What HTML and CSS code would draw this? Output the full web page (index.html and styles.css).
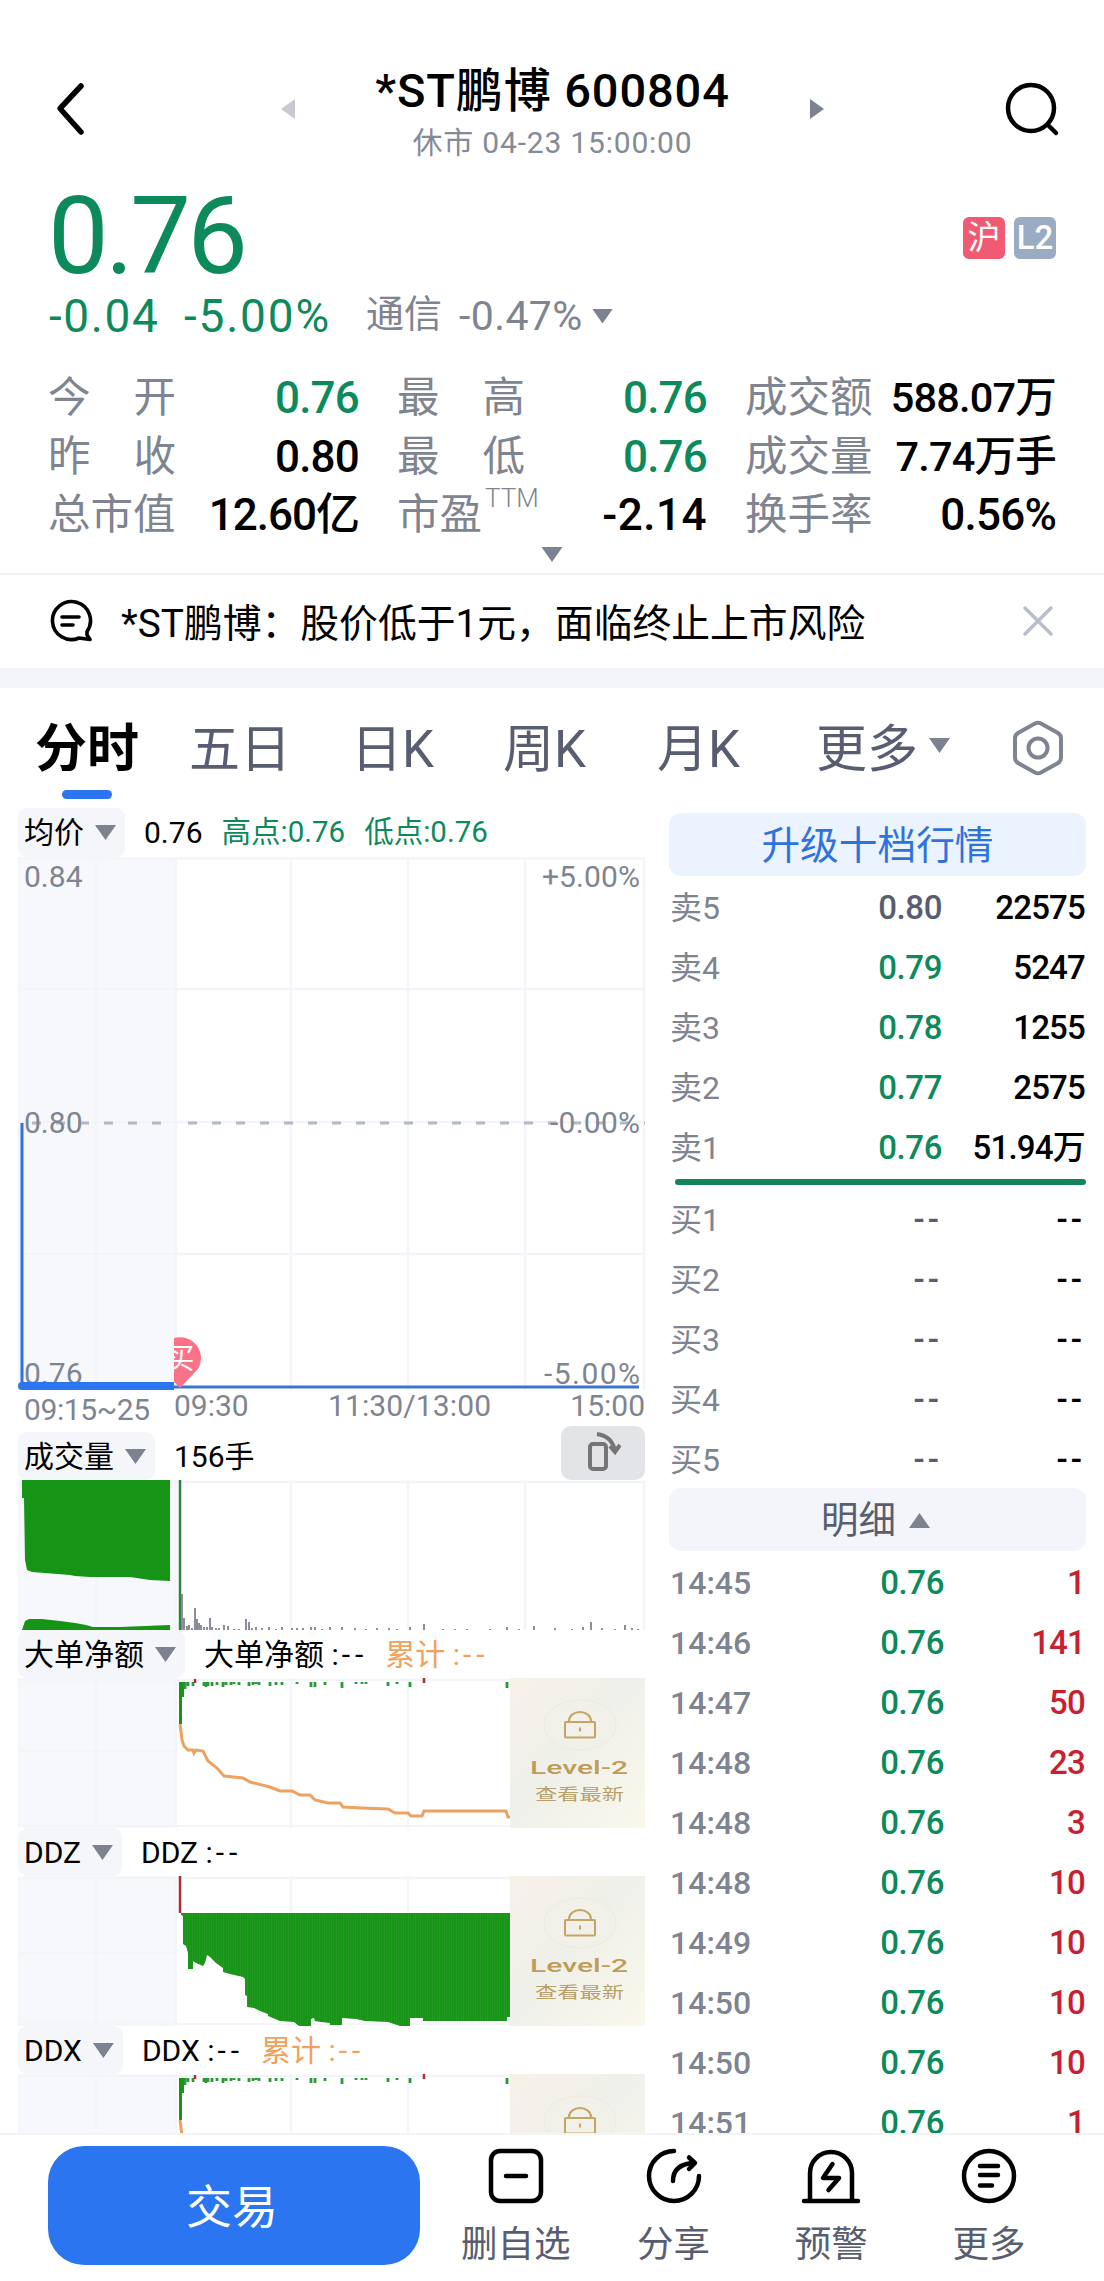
FILE: index.html
```
<!DOCTYPE html>
<html lang="zh-CN">
<head>
    <meta charset="UTF-8">
    <meta name="viewport" content="width=device-width, initial-scale=1.0">
    <title>*ST鹏博 600804</title>
    <link rel="stylesheet" href="styles.css">
</head>
<body>

<!-- shared shapes -->
<svg class="defs" width="0" height="0">
    <defs>
        <linearGradient id="gold" x1="0" y1="0" x2="1" y2="1">
            <stop offset="0" stop-color="#f7f1e9"/>
            <stop offset="0.45" stop-color="#eff0ea"/>
            <stop offset="1" stop-color="#faf8ec"/>
        </linearGradient>
        <pattern id="stripes" width="2.400" height="10" patternUnits="userSpaceOnUse">
            <rect width="2.400" height="10" fill="#169416"/>
            <rect width="0.500" height="10" fill="#2da02d"/>
        </pattern>
        <g id="lock">
            <rect x="510" y="0" width="135" height="150" fill="url(#gold)"/>
            <ellipse cx="580" cy="47" rx="36" ry="25" fill="#f1f1ea" stroke="#ebebe3"/>
            <g fill="none" stroke="#c5a566" stroke-width="2">
                <rect x="565" y="44" width="30" height="15.500" rx="1"/>
                <path d="M569 44v-1a11 9 0 0 1 22 0v1M580 49.500v4"/>
            </g>
            <text class="lock-title" x="530" y="96" textLength="98" lengthAdjust="spacingAndGlyphs">Level-2</text>
            <text class="lock-text" x="535" y="122" textLength="89" lengthAdjust="spacingAndGlyphs">查看最新</text>
        </g>
        <g id="grid">
            <rect x="18" y="0" width="157" height="150" fill="#f6f8fc"/>
            <path d="M18 2H645M19 0V150M96 0V150M176 0V150M291 0V150M408 0V150M525 0V150M644 0V150" fill="none" stroke="#f4f5f9" stroke-width="2.500"/>
        </g>
        <g id="netflow">
            <rect x="179" y="4" width="3" height="42" fill="#169416"/>
            <rect x="181" y="4" width="3" height="15" fill="#169416"/>
            <path d="M185 4v7M188 4v4M193 4v4M204 4v4M206 4v5M208 4v4M212 4v4M217 4v3M223 4v5M226 4v3M231 4v3M234 4v2M239 4v3M249 4v4M253 4v3M256 4v2M259 4v3M270 4v4M276 4v3M282 4v3M297 4v2M311 4v5M315 4v5M325 4v3M342 4v6M356 4v2M362 4v2M366 4v2M388 4v4M397 4v2M410 4v5M507 4v6" fill="none" stroke="#2a9a35" stroke-width="2.800"/>
            <path d="M195 1v4M424 0v5" fill="none" stroke="#b02a37" stroke-width="2.500"/>
            <path d="M180 46L182 62L184 68L188 72H193L194 75L196 72L203 73L208 83L217 90L224 98L243 100L250 104L270 109L280 113H292L300 117H310L315 122L328 125H340L343 129L362 130L388 131L395 135H408L411 138H422L424 133H506L508 139H510" fill="none" stroke="#eca360" stroke-width="3"/>
        </g>
    </defs>
</svg>

<header class="topbar">
    <svg class="back" viewBox="0 0 40 60"><path d="M31 8L10 30.500L31 54"/></svg>
    <svg class="prev" viewBox="0 0 14 20"><path d="M14 0V20L0 10Z"/></svg>
    <div class="title">
        <h1>*ST鹏博 600804</h1>
        <p>休市 04-23 15:00:00</p>
    </div>
    <svg class="next" viewBox="0 0 14 20"><path d="M0 0V20L14 10Z"/></svg>
    <svg class="search" viewBox="0 0 60 60"><circle cx="29" cy="29" r="23"/><path d="M46 46L54 54"/></svg>
</header>

<section class="quote">
    <div class="price-row">
        <span class="price">0.76</span>
        <span class="badges"><i class="badge red">沪</i><i class="badge blue">L2</i></span>
    </div>
    <div class="change-row">
        <span class="chg">-0.04</span>
        <span class="pct">-5.00%</span>
        <span class="sector">通信</span>
        <span class="sector-pct">-0.47%</span>
        <i class="tri"></i>
    </div>
    <div class="stats">
        <div><span class="spread"><b>今</b><b>开</b></span><em class="green">0.76</em></div>
        <div><span class="spread"><b>最</b><b>高</b></span><em class="green">0.76</em></div>
        <div><span>成交额</span><em class="small">588.07万</em></div>
        <div><span class="spread"><b>昨</b><b>收</b></span><em>0.80</em></div>
        <div><span class="spread"><b>最</b><b>低</b></span><em class="green">0.76</em></div>
        <div><span>成交量</span><em class="small">7.74万手</em></div>
        <div><span>总市值</span><em class="cap">12.60亿</em></div>
        <div><span>市盈<sup>TTM</sup></span><em class="pe">-2.14</em></div>
        <div><span>换手率</span><em>0.56%</em></div>
    </div>
    <div class="expand"><i class="tri"></i></div>
</section>

<section class="notice">
    <svg class="bubble" viewBox="0 0 46 46"><path d="M39 33.500A19 19 0 1 0 31 40L42 41.500L39 37Z"/><path d="M14 19H31M14 27H25"/></svg>
    <p>*ST鹏博：股价低于1元，面临终止上市风险</p>
    <svg class="close" viewBox="0 0 30 30"><path d="M2 2L28 28M28 2L2 28"/></svg>
</section>

<nav class="tabs">
    <a class="active">分时</a>
    <a>五日</a>
    <a>日K</a>
    <a>周K</a>
    <a>月K</a>
    <a class="more">更多<i class="tri"></i></a>
    <svg class="setting" viewBox="0 0 52 56"><path d="M23 3.500Q26 2 29 3.500L46 13Q49 15 49 18V38Q49 41 46 43L29 52.500Q26 54 23 52.500L6 43Q3 41 3 38V18Q3 15 6 13Z"/><circle cx="26" cy="28" r="9.500"/></svg>
</nav>

<main class="board">
    <section class="charts">
        <div class="bar first">
            <span class="pill">均价<i class="tri"></i></span>
            <span class="v1">0.76</span>
            <span class="v2">高点:0.76</span>
            <span class="v2">低点:0.76</span>
        </div>
        <svg class="price-chart" viewBox="18 857 627 575">
            <rect x="18" y="857" width="157" height="533" fill="#f6f8fc"/>
            <path d="M18 858.500H645M18 989H645M18 1122H645M18 1254H645M19 857V1390M96 857V1390M176 857V1390M291 857V1390M408 857V1390M525 857V1390M644 857V1390" fill="none" stroke="#f4f5f9" stroke-width="2.500"/>
            <path d="M32 1123H174" stroke="#b4b8c5" stroke-width="3" stroke-dasharray="9 15"/>
            <path d="M188 1123H645" stroke="#b4b8c5" stroke-width="3" stroke-dasharray="9 15"/>
            <g class="axis">
                <text x="24" y="887">0.84</text>
                <text x="24" y="1133">0.80</text>
                <text x="24" y="1384">0.76</text>
                <text x="640" y="887" text-anchor="end" textLength="98">+5.00%</text>
                <text x="640" y="1133" text-anchor="end" textLength="90">-0.00%</text>
                <text x="640" y="1384" text-anchor="end" textLength="96">-5.00%</text>
                <text x="24" y="1420" textLength="126">09:15~25</text>
                <text x="174" y="1416">09:30</text>
                <text x="328" y="1416" textLength="163">11:30/13:00</text>
                <text x="645" y="1416" text-anchor="end">15:00</text>
            </g>
            <path d="M22 1123V1386" stroke="#2f72e0" stroke-width="3"/>
            <path d="M174 1387H639" stroke="#3d74cf" stroke-width="3"/>
            <path d="M22 1386H174" stroke="#2b75f0" stroke-width="8"/>
            <circle cx="22" cy="1386" r="4" fill="#2b75f0"/>
            <clipPath id="half"><rect x="174" y="1330" width="40" height="60"/></clipPath>
            <g clip-path="url(#half)">
                <path d="M180 1388L162 1369A21 21 0 1 1 198 1369Z" fill="#fa7288"/>
                <text class="buy" x="180" y="1369" text-anchor="middle">买</text>
            </g>
        </svg>

        <div class="bar">
            <span class="pill">成交量<i class="tri"></i></span>
            <span class="v1">156手</span>
            <span class="rotate"><svg viewBox="0 0 40 44"><rect x="9" y="13" width="16" height="25" rx="3"/><path d="M16 3Q31 5 34 20M29 15L34 21L39 14"/></svg></span>
        </div>
        <svg class="sub" viewBox="18 0 627 150">
            <use href="#grid"/>
            <path d="M22 0H170V101L150 100L130 97L90 97L75 96L70 95L32 92L27 90L25 80L24 18H22Z" fill="#169416"/>
            <path d="M22 150L25 141L29 139H42L60 141L75 143L86 145L93 147L120 147L170 145V150Z" fill="#169416"/>
            <path d="M180 0V150" stroke="#2b8540" stroke-width="2.500"/>
            <path d="M182 114V150M184 138V150M187 146V150M189 145V150M192 148V150M195 128V150M197 139V150M199 143V150M201 145V150M204 147V150M207 147V150M210 138V150M212 147V150M216 148V150M219 148V150M224 145V150M228 146V150M234 149V150M239 149V150M246 139V150M249 142V150M252 148V150M256 147V150M262 148V150M269 147V150M276 149V150M282 147V150M292 148V150M297 148V150M303 148V150M311 147V150M315 147V150M322 149V150M330 147V150M342 147V150M355 148V150M366 149V150M377 148V150M389 148V150M397 149V150M410 147V150M424 144V150M443 149V150M455 149V150M467 149V150M490 149V150M507 147V150M519 149V150M534 146V150M555 148V150M572 149V150M583 147V150M591 142V150M602 148V150M615 149V150M625 145V150M632 148V150M638 149V150" fill="none" stroke="#8a8e98" stroke-width="2"/>
        </svg>

        <div class="bar">
            <span class="pill">大单净额<i class="tri"></i></span>
            <span class="v1">大单净额 :<s>--</s></span>
            <span class="v3">累计 :<s>--</s></span>
        </div>
        <svg class="sub" viewBox="18 0 627 150">
            <use href="#grid"/>
            <path d="M18 73H175M18 148H510" fill="none" stroke="#f4f5f9" stroke-width="2"/>
            <use href="#netflow"/>
            <use href="#lock"/>
        </svg>

        <div class="bar">
            <span class="pill">DDZ<i class="tri"></i></span>
            <span class="v1">DDZ :<s>--</s></span>
        </div>
        <svg class="sub" viewBox="18 0 627 150">
            <use href="#grid"/>
            <path d="M18 77H175M18 148H510" fill="none" stroke="#f4f5f9" stroke-width="2"/>
            <path d="M180 0V37" stroke="#b02a37" stroke-width="2.500"/>
            <path d="M181 37H510V141H507V145H423V142H410V150H400L394 148L388 146L365 145L356 143L342 142V149H330V147L321 146L315 145L314 142L311 143V150H299L294 146L280 145L268 140V138L260 135L254 132L247 131V120L245 119V103L243 101L230 98L223 96V92L216 87L210 81L207 79L205 87L203 90L196 87L193 85V93H188V77L186 70L183 68V40L181 39Z" fill="url(#stripes)"/>
            <use href="#lock"/>
        </svg>

        <div class="bar">
            <span class="pill">DDX<i class="tri"></i></span>
            <span class="v1">DDX :<s>--</s></span>
            <span class="v3">累计 :<s>--</s></span>
        </div>
        <svg class="sub" viewBox="18 0 627 150">
            <use href="#grid"/>
            <use href="#netflow"/>
            <use href="#lock"/>
        </svg>
    </section>

    <aside class="book">
        <div class="upgrade">升级十档行情</div>
        <div class="row"><span>卖5</span><b class="flat">0.80</b><em>22575</em></div>
        <div class="row"><span>卖4</span><b>0.79</b><em>5247</em></div>
        <div class="row"><span>卖3</span><b>0.78</b><em>1255</em></div>
        <div class="row"><span>卖2</span><b>0.77</b><em>2575</em></div>
        <div class="row"><span>卖1</span><b>0.76</b><em>51.94万</em></div>
        <div class="split"></div>
        <div class="row"><span>买1</span><b class="flat dash">--</b><em class="dash">--</em></div>
        <div class="row"><span>买2</span><b class="flat dash">--</b><em class="dash">--</em></div>
        <div class="row"><span>买3</span><b class="flat dash">--</b><em class="dash">--</em></div>
        <div class="row"><span>买4</span><b class="flat dash">--</b><em class="dash">--</em></div>
        <div class="row"><span>买5</span><b class="flat dash">--</b><em class="dash">--</em></div>
        <div class="detail">明细<i class="tri up"></i></div>
        <div class="row tick"><span>14:45</span><b>0.76</b><em>1</em></div>
        <div class="row tick"><span>14:46</span><b>0.76</b><em>141</em></div>
        <div class="row tick"><span>14:47</span><b>0.76</b><em>50</em></div>
        <div class="row tick"><span>14:48</span><b>0.76</b><em>23</em></div>
        <div class="row tick"><span>14:48</span><b>0.76</b><em>3</em></div>
        <div class="row tick"><span>14:48</span><b>0.76</b><em>10</em></div>
        <div class="row tick"><span>14:49</span><b>0.76</b><em>10</em></div>
        <div class="row tick"><span>14:50</span><b>0.76</b><em>10</em></div>
        <div class="row tick"><span>14:50</span><b>0.76</b><em>10</em></div>
        <div class="row tick"><span>14:51</span><b>0.76</b><em>1</em></div>
    </aside>
</main>

<footer class="actions">
    <button class="trade">交易</button>
    <a><svg viewBox="0 0 60 56"><rect x="5" y="3" width="50" height="50" rx="9"/><path d="M20 28H40"/></svg>删自选</a>
    <a><svg viewBox="0 0 60 56"><path d="M30 3A25 25 0 1 0 55 28"/><path d="M29 33Q29 16 50 15M45 9.500L51 15L45 21"/></svg>分享</a>
    <a><svg viewBox="0 0 60 56"><path d="M9 52V25A21 21 0 0 1 51 25V52M3 53H57M31.500 16L22 30H38L27.500 42"/></svg>预警</a>
    <a><svg viewBox="0 0 60 56"><circle cx="30" cy="28" r="25"/><path d="M21 18H39M21 27H39M21 37.500H33"/></svg>更多</a>
</footer>

</body>
</html>
```
FILE: styles.css
```
* {
    box-sizing: border-box;
}
body {
    width: 1104px;
    height: 2281px;
    margin: 0;
    overflow: hidden;
    background-color: #fff;
    color: #000;
    font-family: Roboto, "Noto Sans CJK SC", sans-serif;
}
h1, p {
    margin: 0;
    font-weight: 400;
}
i, em {
    font-style: normal;
}
s {
    text-decoration: none;
    letter-spacing: 5px;
    margin-left: 3px;
}
.defs {
    display: block;
}
.tri {
    display: inline-block;
    width: 21px;
    height: 15px;
    background-color: #7d8290;
    clip-path: polygon(0 0, 100% 0, 50% 100%);
}
.tri.up {
    clip-path: polygon(50% 0, 100% 100%, 0 100%);
}
.green {
    color: #0d8a5c;
}

/* top bar */
.topbar {
    display: flex;
    height: 180px;
    padding: 0 42px 0 50px;
}
.topbar svg {
    flex: none;
    fill: none;
    stroke: #000;
    stroke-linecap: round;
    stroke-linejoin: round;
}
.topbar .back {
    width: 40px;
    height: 60px;
    margin-top: 78px;
    stroke-width: 5.5;
}
.topbar .prev, .topbar .next {
    width: 14px;
    height: 20px;
    margin-top: 99px;
    stroke: none;
    fill: #c8cad1;
}
.topbar .prev {
    margin-left: 191px;
}
.topbar .next {
    fill: #7d8290;
}
.topbar .search {
    width: 60px;
    height: 60px;
    margin: 79px 0 0 auto;
    stroke-width: 4.5;
}
.title {
    width: 515px;
    padding-top: 60px;
    text-align: center;
}
.title h1 {
    font-size: 47px;
    font-weight: 500;
    line-height: 61px;
    letter-spacing: 0.9px;
}
.title p {
    color: #858a97;
    font-size: 30px;
    line-height: 44px;
    letter-spacing: 0.8px;
}

/* quote */
.quote {
    height: 393px;
    padding: 0 48px;
}
.price-row {
    display: flex;
    justify-content: space-between;
    height: 110px;
}
.price {
    color: #0d8a5c;
    font-size: 108px;
    line-height: 113px;
    letter-spacing: -3.5px;
}
.badges {
    display: flex;
    gap: 9px;
    padding-top: 37px;
}
.badge {
    width: 42px;
    height: 42px;
    border-radius: 6px;
    color: #fff;
    font-size: 33px;
    line-height: 42px;
    text-align: center;
}
.badge.red {
    background-color: #f05a72;
}
.badge.blue {
    background-color: #9aabc4;
    font-weight: 500;
}
.change-row {
    display: flex;
    align-items: center;
    height: 52px;
    color: #0d8a5c;
    font-size: 46px;
}
.chg {
    width: 136px;
    padding-left: 1px;
    letter-spacing: 1.6px;
}
.pct {
    width: 182px;
    letter-spacing: 1.8px;
}
.sector, .sector-pct {
    color: #7f8491;
    font-size: 38px;
    line-height: 46px;
}
.sector {
    margin-top: -4px;
}
.sector-pct {
    width: 135px;
    margin-left: 17px;
    font-size: 41px;
    letter-spacing: 0.4px;
}
.change-row .tri {
    margin-left: -2px;
}
.stats {
    display: grid;
    grid-template-columns: 311px 310px 311px;
    column-gap: 38px;
    padding-top: 26px;
    height: 204px;
    align-content: start;
}
.stats div {
    display: flex;
    justify-content: space-between;
    height: 58.5px;
    line-height: 60px;
    white-space: nowrap;
}
.stats span {
    width: 128px;
    color: #7f8491;
    font-size: 42.5px;
}
.stats .spread {
    display: flex;
    justify-content: space-between;
}
.stats b {
    font-weight: 400;
}
.stats sup {
    font-size: 26px;
    font-weight: 300;
    line-height: 0;
    vertical-align: 22px;
    margin-left: 3px;
}
.stats em {
    font-size: 44px;
    font-weight: 500;
    letter-spacing: -0.8px;
}
.stats em.small {
    font-size: 41.5px;
}
.stats em.cap {
    letter-spacing: -1px;
}
.stats em.pe {
    letter-spacing: 0.5px;
}
.expand {
    display: flex;
    justify-content: center;
    padding-top: 1px;
}

/* notice */
.notice {
    display: flex;
    align-items: center;
    height: 115px;
    padding: 0 51px 2px 48px;
    border-top: 2px solid #f4f4f6;
    border-bottom: 20px solid #f4f5fa;
}
.notice p {
    flex: 1;
    margin: -2px 0 0 27px;
    font-size: 38.8px;
}
.notice svg {
    fill: none;
    stroke-linecap: round;
    stroke-linejoin: round;
}
.bubble {
    width: 46px;
    height: 46px;
    stroke: #000;
    stroke-width: 3.6;
}
.close {
    width: 30px;
    height: 30px;
    stroke: #b9bfca;
    stroke-width: 3.5;
}

/* period tabs */
.tabs {
    display: flex;
    height: 120px;
    padding-left: 35px;
    color: #585e70;
    font-size: 51px;
    line-height: 123px;
}
.tabs a {
    width: 159px;
    white-space: nowrap;
}
.tabs a:nth-child(1) {
    width: 154px;
}
.tabs a:nth-child(2) {
    width: 162px;
}
.tabs a:nth-child(3) {
    width: 152px;
}
.tabs a:nth-child(4) {
    width: 154px;
}
.tabs .more {
    width: 196px;
}
.tabs .more .tri {
    margin: 0 0 14px 11px;
}
.tabs .active {
    color: #000;
    font-size: 52px;
    font-weight: 700;
}
.tabs .active::after {
    content: "";
    display: block;
    width: 50px;
    height: 9px;
    margin: -21px 0 0 27px;
    border-radius: 5px;
    background-color: #2b75f0;
}
.setting {
    width: 52px;
    height: 56px;
    margin-top: 32px;
    fill: none;
    stroke: #7f8491;
    stroke-width: 4;
}

/* chart board */
.board {
    display: flex;
    height: 1325px;
    padding-left: 18px;
    overflow: hidden;
}
.charts {
    width: 627px;
}
.charts svg {
    display: block;
}
.bar {
    display: flex;
    height: 48px;
    font-size: 30px;
    line-height: 49px;
    white-space: pre;
}
.bar.first {
    height: 49px;
}
.pill {
    padding: 0 9px 0 6px;
    border-radius: 9px;
    background-color: #f4f6fa;
}
.pill .tri {
    margin: 0 0 3px 11px;
}
.v1 {
    margin-left: 19px;
}
.v2 {
    margin-left: 19px;
    color: #0d8a5c;
    font-size: 29.5px;
}
.v3 {
    margin-left: 17px;
    color: #f0a25c;
}
.rotate {
    width: 84px;
    height: 54px;
    margin: -6px 0 0 auto;
    padding: 5px 20px;
    border-radius: 10px;
    background-color: #e3e4e8;
}
.rotate svg {
    width: 40px;
    height: 44px;
    fill: none;
    stroke: #757575;
    stroke-width: 4;
}
.price-chart {
    width: 627px;
    height: 575px;
}
.sub {
    width: 627px;
    height: 150px;
}
.axis {
    fill: #7f8491;
    font-size: 30px;
}
.buy {
    fill: #fff;
    font-size: 29px;
}
.lock-title {
    fill: #bf9c58;
    font-size: 19px;
    font-weight: 500;
}
.lock-text {
    fill: #b8a06a;
    font-size: 16px;
}

/* order book */
.book {
    width: 417px;
    margin-left: 24px;
    padding-top: 5px;
}
.upgrade, .detail {
    height: 63px;
    border-radius: 12px;
    background-color: #ebf3fe;
    color: #2f72dc;
    font-size: 38.7px;
    line-height: 65px;
    text-align: center;
}
.upgrade {
    margin-bottom: 1px;
}
.detail {
    margin: -1px 0 1px;
    padding-right: 4px;
    background-color: #f4f5fa;
    color: #585e70;
    font-size: 37.5px;
}
.detail .tri {
    margin: 0 0 5px 13px;
}
.row {
    display: flex;
    height: 60px;
    padding: 0 1px;
    font-size: 33px;
    line-height: 62px;
}
.row span {
    width: 100px;
    color: #7f8491;
    font-size: 32px;
}
.row b {
    width: 172px;
    color: #0d8a5c;
    font-weight: 500;
    letter-spacing: -0.4px;
    text-align: right;
}
.row .flat {
    color: #585e70;
}
.row em {
    flex: 1;
    font-weight: 500;
    letter-spacing: -0.8px;
    text-align: right;
}
.row .dash {
    letter-spacing: 3px;
}
.row.tick span {
    font-weight: 500;
}
.row.tick b {
    width: 174px;
}
.row.tick em {
    color: #c8202f;
}
.split {
    height: 6px;
    margin: 2px 0 4px 6px;
    border-radius: 3px;
    background-color: #12855a;
}

/* bottom actions */
.actions {
    display: flex;
    height: 148px;
    padding: 11px 0 0 48px;
    border-top: 2px solid #f4f4f6;
}
.trade {
    width: 372px;
    height: 119px;
    margin-right: 17px;
    padding: 0 4px 6px 0;
    border: none;
    border-radius: 36px;
    background-color: #2b75f0;
    color: #fff;
    font-family: inherit;
    font-size: 46px;
}
.actions a {
    display: flex;
    flex-direction: column;
    align-items: center;
    width: 157.7px;
    color: #585e70;
    font-size: 36.5px;
    line-height: 50px;
}
.actions svg {
    width: 60px;
    height: 56px;
    margin: 2px 0 16px;
    fill: none;
    stroke: #000;
    stroke-width: 4.5;
    stroke-linecap: round;
    stroke-linejoin: round;
}
```
